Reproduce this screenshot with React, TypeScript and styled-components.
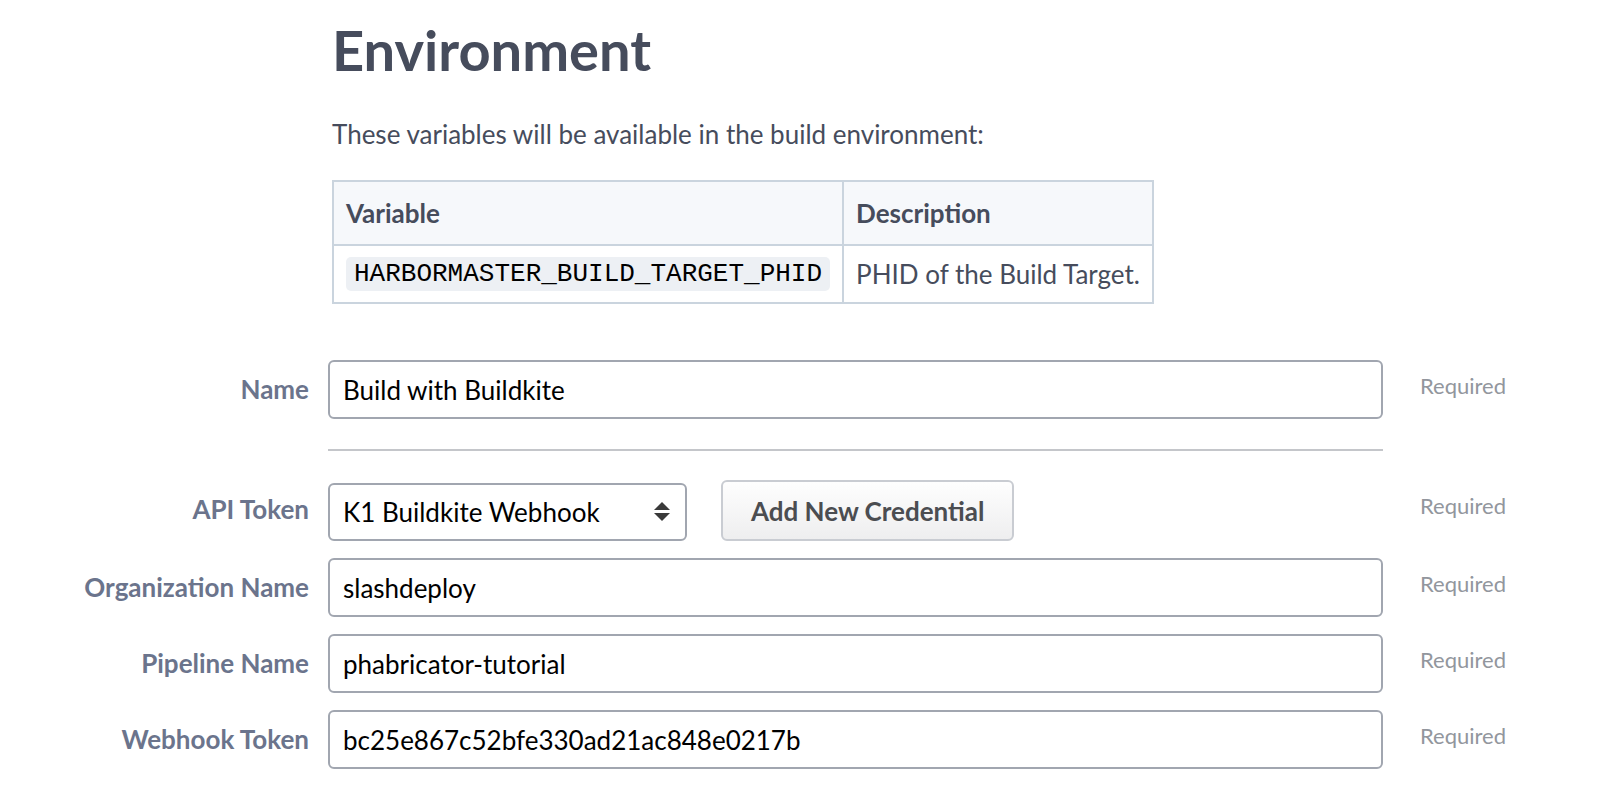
import React from "react";
import styled, { createGlobalStyle } from "styled-components";

const GlobalStyle = createGlobalStyle`
  html, body {
    margin: 0;
    padding: 0;
    background: #ffffff;
  }
  body {
    font-family: Lato, "Noto Sans", "Liberation Sans", sans-serif;
    color: #464c5c;
  }
  * { box-sizing: border-box; }
`;

const Page = styled.div`
  width: 1620px;
  min-height: 790px;
  padding-top: 16px;
`;

const DocSection = styled.section`
  padding-left: 332px;
`;

const Title = styled.h1`
  margin: 0;
  font-size: 56px;
  line-height: 67px;
  font-weight: 700;
  color: #464c5c;
`;

const Intro = styled.p`
  margin: 36px 0 0;
  font-size: 26px;
  line-height: 31px;
  color: #464c5c;
`;

const VarTable = styled.table`
  margin-top: 30px;
  border-collapse: collapse;
  border: 2px solid #cad4de;
  font-size: 26px;
  color: #464c5c;
`;

const HeadCell = styled.th`
  text-align: left;
  font-weight: 700;
  padding: 15px 12px;
  line-height: 32px;
  background: #f6f8fb;
  border: 2px solid #cad4de;
`;

const BodyCell = styled.td`
  padding: 11px 12px;
  line-height: 34px;
  border: 2px solid #cad4de;
  vertical-align: middle;
`;

const Code = styled.code`
  display: inline-block;
  vertical-align: top;
  padding: 0 8px;
  line-height: 34px;
  border-radius: 5px;
  background: #edf0f4;
  color: #000;
  font-family: "Liberation Mono", "DejaVu Sans Mono", monospace;
  font-size: 26px;
`;

const Form = styled.div`
  margin-top: 56px;
  display: flex;
  flex-direction: column;
`;

const Row = styled.div<{ $gap?: number }>`
  display: flex;
  align-items: flex-start;
  margin-top: ${(p) => p.$gap ?? 17}px;
`;

const Label = styled.label`
  flex: 0 0 328px;
  padding: 14px 19px 0 0;
  text-align: right;
  font-size: 26px;
  line-height: 31px;
  font-weight: 700;
  color: #6b748c;
`;

const Control = styled.div`
  flex: 0 0 1055px;
  display: flex;
  align-items: flex-end;
  gap: 34px;
`;

const TextInput = styled.input`
  width: 100%;
  height: 59px;
  padding: 0 13px;
  border: 2px solid #a1a6b0;
  border-radius: 6px;
  background: #fff;
  font-family: Lato, "Noto Sans", sans-serif;
  font-size: 26px;
  color: #000;
  outline: none;
`;

const SelectWrap = styled.div`
  position: relative;
  width: 359px;
  height: 58px;
`;

const Select = styled.select`
  width: 100%;
  height: 58px;
  padding: 0 40px 0 13px;
  border: 2px solid #a1a6b0;
  border-radius: 6px;
  background: #fff;
  font-family: Lato, "Noto Sans", sans-serif;
  font-size: 26px;
  color: #000;
  appearance: none;
  -webkit-appearance: none;
  outline: none;
`;

const SelectArrows = styled.svg`
  position: absolute;
  right: 17px;
  top: 19px;
  pointer-events: none;
`;

const Button = styled.button`
  height: 61px;
  padding: 0 28px;
  border: 2px solid #c9ccd2;
  border-radius: 6px;
  background: linear-gradient(to bottom, #fefefe, #eeeeef);
  font-family: Lato, "Noto Sans", sans-serif;
  font-size: 26px;
  font-weight: 700;
  color: #4b4d51;
  cursor: pointer;
`;

const Hint = styled.span`
  margin-left: 37px;
  padding-top: 13px;
  font-size: 22px;
  line-height: 26px;
  color: #92969d;
`;

const Divider = styled.hr`
  margin: 30px 0 0 328px;
  width: 1055px;
  height: 2px;
  border: 0;
  background: #c4c6ca;
`;

type Field = { label: string; value: string };

const fields: Field[] = [
  { label: "Organization Name", value: "slashdeploy" },
  { label: "Pipeline Name", value: "phabricator-tutorial" },
  { label: "Webhook Token", value: "bc25e867c52bfe330ad21ac848e0217b" },
];

export default function App() {
  return (
    <>
      <GlobalStyle />
      <Page>
        <DocSection>
          <Title>Environment</Title>
          <Intro>These variables will be available in the build environment:</Intro>
          <VarTable>
            <thead>
              <tr>
                <HeadCell>Variable</HeadCell>
                <HeadCell>Description</HeadCell>
              </tr>
            </thead>
            <tbody>
              <tr>
                <BodyCell>
                  <Code>HARBORMASTER_BUILD_TARGET_PHID</Code>
                </BodyCell>
                <BodyCell>PHID of the Build Target.</BodyCell>
              </tr>
            </tbody>
          </VarTable>
        </DocSection>

        <Form>
          <Row $gap={0}>
            <Label>Name</Label>
            <Control>
              <TextInput defaultValue="Build with Buildkite" />
            </Control>
            <Hint>Required</Hint>
          </Row>

          <Divider />

          <Row $gap={29}>
            <Label>API Token</Label>
            <Control>
              <SelectWrap>
                <Select defaultValue="k1">
                  <option value="k1">K1 Buildkite Webhook</option>
                </Select>
                <SelectArrows width="16" height="19" viewBox="0 0 16 19">
                  <path d="M0 8 L8 0 L16 8 Z" fill="#3a3a3a" />
                  <path d="M0 11 L16 11 L8 19 Z" fill="#3a3a3a" />
                </SelectArrows>
              </SelectWrap>
              <Button type="button">Add New Credential</Button>
            </Control>
            <Hint>Required</Hint>
          </Row>

          {fields.map((f) => (
            <Row key={f.label}>
              <Label>{f.label}</Label>
              <Control>
                <TextInput defaultValue={f.value} />
              </Control>
              <Hint>Required</Hint>
            </Row>
          ))}
        </Form>
      </Page>
    </>
  );
}
